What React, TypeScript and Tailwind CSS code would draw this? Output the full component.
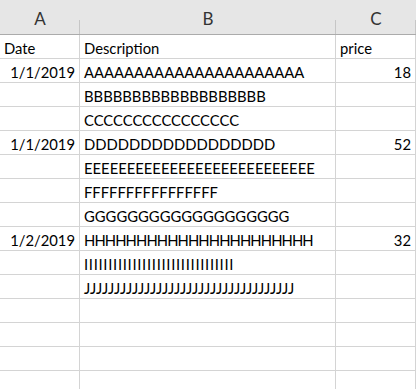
const rows: [string, string, string][] = [
  ["Date", "Description", "price"],
  ["1/1/2019", "AAAAAAAAAAAAAAAAAAAAAA", "18"],
  ["", "BBBBBBBBBBBBBBBBBBB", ""],
  ["", "CCCCCCCCCCCCCCCC", ""],
  ["1/1/2019", "DDDDDDDDDDDDDDDDD", "52"],
  ["", "EEEEEEEEEEEEEEEEEEEEEEEEEEE", ""],
  ["", "FFFFFFFFFFFFFFFF", ""],
  ["", "GGGGGGGGGGGGGGGGGGG", ""],
  ["1/2/2019", "HHHHHHHHHHHHHHHHHHHHHH", "32"],
  ["", "IIIIIIIIIIIIIIIIIIIIIIIIIIIIIII", ""],
  ["", "JJJJJJJJJJJJJJJJJJJJJJJJJJJJJJJJJJJ", ""],
  ["", "", ""],
  ["", "", ""],
  ["", "", ""],
  ["", "", ""],
];

// numbers and dates sit on the right, like a spreadsheet does
function isNumeric(value: string) {
  return /^[0-9/]+$/.test(value);
}

// Lato's I and H run a little narrower / wider than the sheet's font
function trackingFor(value: string) {
  if (/^I+$/.test(value)) return "tracking-[0.7px]";
  if (/^H+$/.test(value)) return "tracking-[-0.9px]";
  return "";
}

function Cell({ value }: { value: string }) {
  const right = isNumeric(value);
  return (
    <div
      className={`flex h-6 items-end overflow-visible whitespace-nowrap border-b border-r border-[#d4d4d4] px-1 leading-[20px] ${
        right ? "justify-end" : "justify-start"
      } ${trackingFor(value)}`}
    >
      {value}
    </div>
  );
}

function HeaderCell({ label }: { label: string }) {
  return (
    <div className="relative flex h-[35px] items-end justify-center border-b border-[#ababab] pb-[4px] text-[17px] leading-[22px] text-[#333]">
      {label}
      <span className="absolute bottom-0 right-0 h-[14px] w-px bg-[#c6c6c6]" />
    </div>
  );
}

export default function App() {
  return (
    <div
      className="h-[389px] w-[416px] overflow-hidden bg-white text-[14.8px] text-black"
      style={{ fontFamily: 'Lato, "Noto Sans", sans-serif' }}
    >
      <div className="grid grid-cols-[80px_256px_80px] bg-[#e6e6e6]">
        <HeaderCell label="A" />
        <HeaderCell label="B" />
        <HeaderCell label="C" />
      </div>
      <div className="grid grid-cols-[80px_256px_80px]">
        {rows.map((row, i) =>
          row.map((value, j) => <Cell key={`${i}-${j}`} value={value} />)
        )}
      </div>
    </div>
  );
}
